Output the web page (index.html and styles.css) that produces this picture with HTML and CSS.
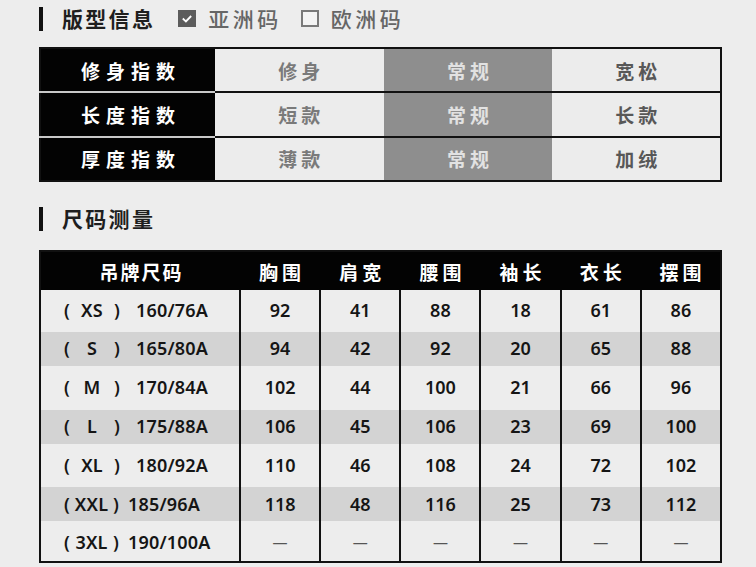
FILE: index.html
```html
<!DOCTYPE html>
<html lang="zh-CN">
<head>
<meta charset="utf-8">
<title>尺码信息</title>
<link rel="stylesheet" href="styles.css">
</head>
<body>
<div class="page">
  <div class="sec-head">
    <span class="bar"></span>
    <h2 class="sec-title">版型信息</h2>
    <span class="opt">
      <span class="box checked"><svg viewBox="0 0 18 18" width="18" height="18"><path d="M4.5 9.2 L7.6 12 L13.5 6" fill="none" stroke="#fff" stroke-width="2.4" stroke-linecap="square"/></svg></span>
      <span class="opt-label">亚洲码</span>
    </span>
    <span class="opt">
      <span class="box"></span>
      <span class="opt-label">欧洲码</span>
    </span>
  </div>

  <table class="fit">
    <colgroup><col class="c-head"><col class="c-val"><col class="c-val"><col class="c-val"></colgroup>
    <tr><th>修身指数</th><td>修身</td><td class="sel">常规</td><td class="dark">宽松</td></tr>
    <tr><th>长度指数</th><td>短款</td><td class="sel">常规</td><td class="dark">长款</td></tr>
    <tr><th>厚度指数</th><td>薄款</td><td class="sel">常规</td><td class="dark">加绒</td></tr>
  </table>

  <div class="sec-head sec2">
    <span class="bar"></span>
    <h2 class="sec-title">尺码测量</h2>
  </div>

  <table class="sizes">
    <colgroup><col class="c-size"><col><col><col><col><col><col></colgroup>
    <thead>
      <tr><th class="tag">吊牌尺码</th><th>胸围</th><th>肩宽</th><th>腰围</th><th>袖长</th><th>衣长</th><th>摆围</th></tr>
    </thead>
    <tbody>
      <tr><td class="lbl"><span class="sz"><i>(</i><b>XS</b><i>)</i></span>160/76A</td><td>92</td><td>41</td><td>88</td><td>18</td><td>61</td><td>86</td></tr>
      <tr class="alt"><td class="lbl"><span class="sz"><i>(</i><b>S</b><i>)</i></span>165/80A</td><td>94</td><td>42</td><td>92</td><td>20</td><td>65</td><td>88</td></tr>
      <tr><td class="lbl"><span class="sz"><i>(</i><b>M</b><i>)</i></span>170/84A</td><td>102</td><td>44</td><td>100</td><td>21</td><td>66</td><td>96</td></tr>
      <tr class="alt"><td class="lbl"><span class="sz"><i>(</i><b>L</b><i>)</i></span>175/88A</td><td>106</td><td>45</td><td>106</td><td>23</td><td>69</td><td>100</td></tr>
      <tr><td class="lbl"><span class="sz"><i>(</i><b>XL</b><i>)</i></span>180/92A</td><td>110</td><td>46</td><td>108</td><td>24</td><td>72</td><td>102</td></tr>
      <tr class="alt"><td class="lbl"><span class="sz tight"><i>(</i><b>XXL</b><i>)</i></span>185/96A</td><td>118</td><td>48</td><td>116</td><td>25</td><td>73</td><td>112</td></tr>
      <tr><td class="lbl"><span class="sz tight"><i>(</i><b>3XL</b><i>)</i></span>190/100A</td><td class="na">—</td><td class="na">—</td><td class="na">—</td><td class="na">—</td><td class="na">—</td><td class="na">—</td></tr>
    </tbody>
  </table>
</div>
</body>
</html>
```

FILE: styles.css
```css
html, body {
  margin: 0;
  padding: 0;
  background: #ededed;
}
body {
  font-family: "Noto Sans CJK SC", "Liberation Sans", sans-serif;
  color: #222;
}
.page {
  padding: 0 0 0 39px;
  width: 683px;
}
.sec-head {
  display: flex;
  align-items: center;
  height: 37px;
  margin-bottom: 10px;
}
.sec2 {
  margin-top: 18px;
  margin-bottom: 13px;
}
.bar {
  width: 4px;
  height: 24px;
  background: #111;
  margin-right: 19px;
}
.sec-title {
  margin: 0;
  font-size: 21px;
  font-weight: 700;
  letter-spacing: 2.3px;
  color: #1e1e1e;
  line-height: 1;
}
.opt {
  display: flex;
  align-items: center;
  margin-left: 23px;
}
.opt + .opt {
  margin-left: 19px;
}
.box {
  width: 18px;
  height: 17px;
  box-sizing: border-box;
  display: inline-flex;
  border: 2px solid #7a7a7a;
  background: #f4f4f4;
}
.box.checked {
  background: #5c5c5c;
  border-color: #5c5c5c;
  align-items: center;
  justify-content: center;
}
.box.checked svg {
  width: 14px;
  height: 14px;
}
.opt-label {
  margin-left: 12px;
  font-size: 21px;
  letter-spacing: 3.5px;
  color: #666;
  font-weight: 500;
  line-height: 1;
}

/* fit table */
.fit {
  width: 683px;
  border-collapse: collapse;
  table-layout: fixed;
  border: 2px solid #111;
}
.fit .c-head { width: 175px; }
.fit th, .fit td {
  height: 42.4px;
  padding: 0;
  text-align: center;
  font-size: 19px;
  font-weight: 700;
  line-height: 1;
}
.fit tr + tr th { border-top: 2px solid #c8c8c8; }
.fit tr + tr td { border-top: 2px solid #111; }
.fit th {
  background: #030303;
  color: #fff;
  letter-spacing: 6px;
  padding-left: 6px;
}
.fit td {
  background: #ececec;
  color: #7a7a7a;
  letter-spacing: 4px;
  padding-left: 4px;
}
.fit td.sel {
  background: #8e8e8e;
  color: #e2e2e2;
}
.fit td.dark {
  color: #585858;
}

/* size table */
.sizes {
  width: 683px;
  border-collapse: collapse;
  table-layout: fixed;
  border: 2px solid #111;
}
.sizes .c-size { width: 200px; }
.sizes thead th {
  background: #030303;
  color: #fff;
  height: 38px;
  padding: 0 0 0 4px;
  font-size: 19px;
  font-weight: 700;
  letter-spacing: 4px;
  line-height: 1;
  text-align: center;
}
.sizes thead th.tag {
  letter-spacing: 2px;
  padding-left: 2px;
}
.sizes td {
  height: 38.85px;
  padding: 0;
  box-sizing: border-box;
  text-align: center;
  font-family: "Noto Sans", "Liberation Sans", "Noto Sans CJK SC", sans-serif;
  font-weight: 600;
  font-size: 18px;
  color: #151515;
  line-height: 1;
  border-left: 2px solid #111;
  background: #ededed;
}
.sizes tr.alt td {
  background: #d3d3d3;
  box-shadow: inset 0 3px 0 #ededed, inset 0 -2px 0 #ededed;
}
.sizes td.lbl {
  text-align: left;
  padding-left: 23px;
  letter-spacing: 0.2px;
  border-left: none;
  white-space: nowrap;
}
.sz {
  display: inline-flex;
  justify-content: space-between;
  align-items: center;
  width: 56px;
  margin-right: 16px;
}
.sz.tight {
  width: 55px;
  margin-right: 9px;
}
.sz i, .sz b {
  font-style: normal;
  font-weight: 600;
}
.sizes td.na {
  color: #555;
  font-size: 15px;
  font-weight: 400;
}
```
